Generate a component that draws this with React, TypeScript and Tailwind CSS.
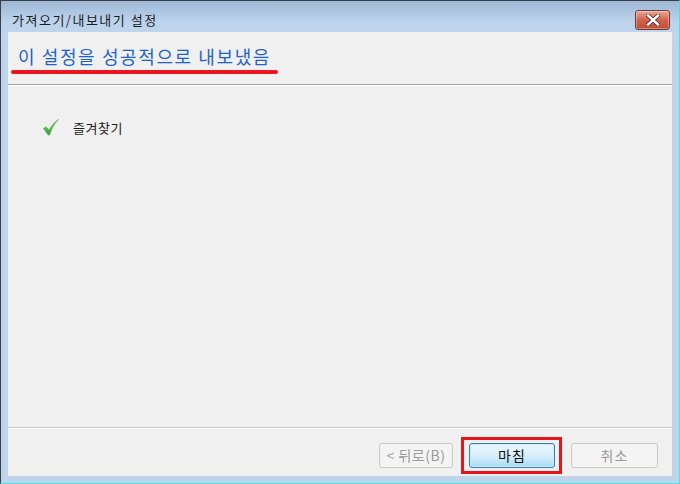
const FONT = { fontFamily: '"Noto Sans CJK KR", "Noto Sans", sans-serif' };

function CloseButton() {
  return (
    <div className="w-[35px] h-[20px] rounded-[3px] border border-[#6d3a33] bg-gradient-to-b from-[#e9a795] via-[#d0634c] to-[#c24a33] flex items-center justify-center shadow-[inset_0_0_0_1px_rgba(255,255,255,0.35)]">
      <svg width="14" height="12" viewBox="0 0 14 12">
        <path
          d="M2 1.5 L12 10.5 M12 1.5 L2 10.5"
          stroke="#5a2a24"
          strokeWidth="4"
          strokeLinecap="square"
        />
        <path
          d="M2 1.5 L12 10.5 M12 1.5 L2 10.5"
          stroke="#ffffff"
          strokeWidth="2.4"
          strokeLinecap="square"
        />
      </svg>
    </div>
  );
}

function CheckMark() {
  return (
    <svg width="16" height="17" viewBox="0 0 16 17">
      <defs>
        <linearGradient id="chk" x1="0" y1="0" x2="0" y2="1">
          <stop offset="0" stopColor="#8ee07c" />
          <stop offset="1" stopColor="#2f9e2a" />
        </linearGradient>
      </defs>
      <path
        d="M0.5 9.5 L3 7.8 L6 11.2 C8.5 6.5 11.5 3 15.5 0.5 C12 4 9 8.5 6.6 16 L5.2 16 Z"
        fill="url(#chk)"
        stroke="#3a9a30"
        strokeWidth="0.5"
        strokeLinejoin="round"
      />
    </svg>
  );
}

export default function App() {
  return (
    <div
      className="w-[680px] h-[484px] flex flex-col border-l border-t border-[#3a3f47] border-r border-r-[#3ee8f0] border-b border-b-[#3ee8f0] bg-gradient-to-b from-[#9db7d4] via-[#bcd3ec] to-[#c1d6ec] bg-[length:100%_40px] bg-no-repeat bg-[#bed4eb]"
      style={FONT}
    >
      {/* title bar */}
      <div className="h-[31px] flex items-center pl-[11px] pr-[9px]">
        <span className="text-[13px] text-[#1b1b1b] tracking-[1.5px] flex-1 pt-[6px]">가져오기/내보내기 설정</span>
        <div className="self-start mt-[9px]">
          <CloseButton />
        </div>
      </div>

      {/* client */}
      <div className="flex-1 mx-[7px] mb-[7px] bg-[#f0f0f0] flex flex-col">
        <div className="h-[52px] pl-[9px] pt-[12px] flex flex-col">
          <span className="text-[18px] leading-[24px] text-[#1f63c8] tracking-[1.6px] pl-[1px]">
            이 설정을 성공적으로 내보냈음
          </span>
          <div className="ml-[-6px] mt-[2px] w-[267px] h-[4px] rounded-full bg-[#ec1620]" />
        </div>
        <div className="h-[2px] border-t border-[#a0a0a0] border-b border-b-[#ffffff]" />

        <div className="flex-1 pt-[32px] pl-[35px]">
          <div className="flex items-center gap-[14px]">
            <CheckMark />
            <span className="text-[13px] text-[#1b1b1b] tracking-[0.5px]">즐겨찾기</span>
          </div>
        </div>

        <div className="h-[2px] border-t border-[#c8c8c8] border-b border-b-[#ffffff]" />
        <div className="h-[47px] flex items-start pt-[8px] pl-[371px] text-[14px]">
          <div className="mt-[6px] w-[74px] h-[25px] rounded-[3px] border border-[#c9c9c9] bg-[#f4f4f4] flex items-center justify-center text-[#9a9a9a] tracking-[0.5px]">
            &lt; 뒤로(B)
          </div>
          <div className="ml-[8px] border-[3px] border-[#e8141c] pl-[5px] pr-[4px] py-[3px]">
            <div className="w-[86px] h-[25px] rounded-[3px] border border-[#3c7fb1] bg-gradient-to-b from-[#eaf6fd] via-[#d9f0fc] to-[#a7d9f5] flex items-center justify-center text-[#111] shadow-[inset_0_0_0_1px_#c6eaff] tracking-[1px]">
              마침
            </div>
          </div>
          <div className="ml-[9px] mt-[6px] w-[87px] h-[25px] rounded-[3px] border border-[#c9c9c9] bg-[#f4f4f4] flex items-center justify-center text-[#9a9a9a] tracking-[1px]">
            취소
          </div>
        </div>
      </div>
    </div>
  );
}
